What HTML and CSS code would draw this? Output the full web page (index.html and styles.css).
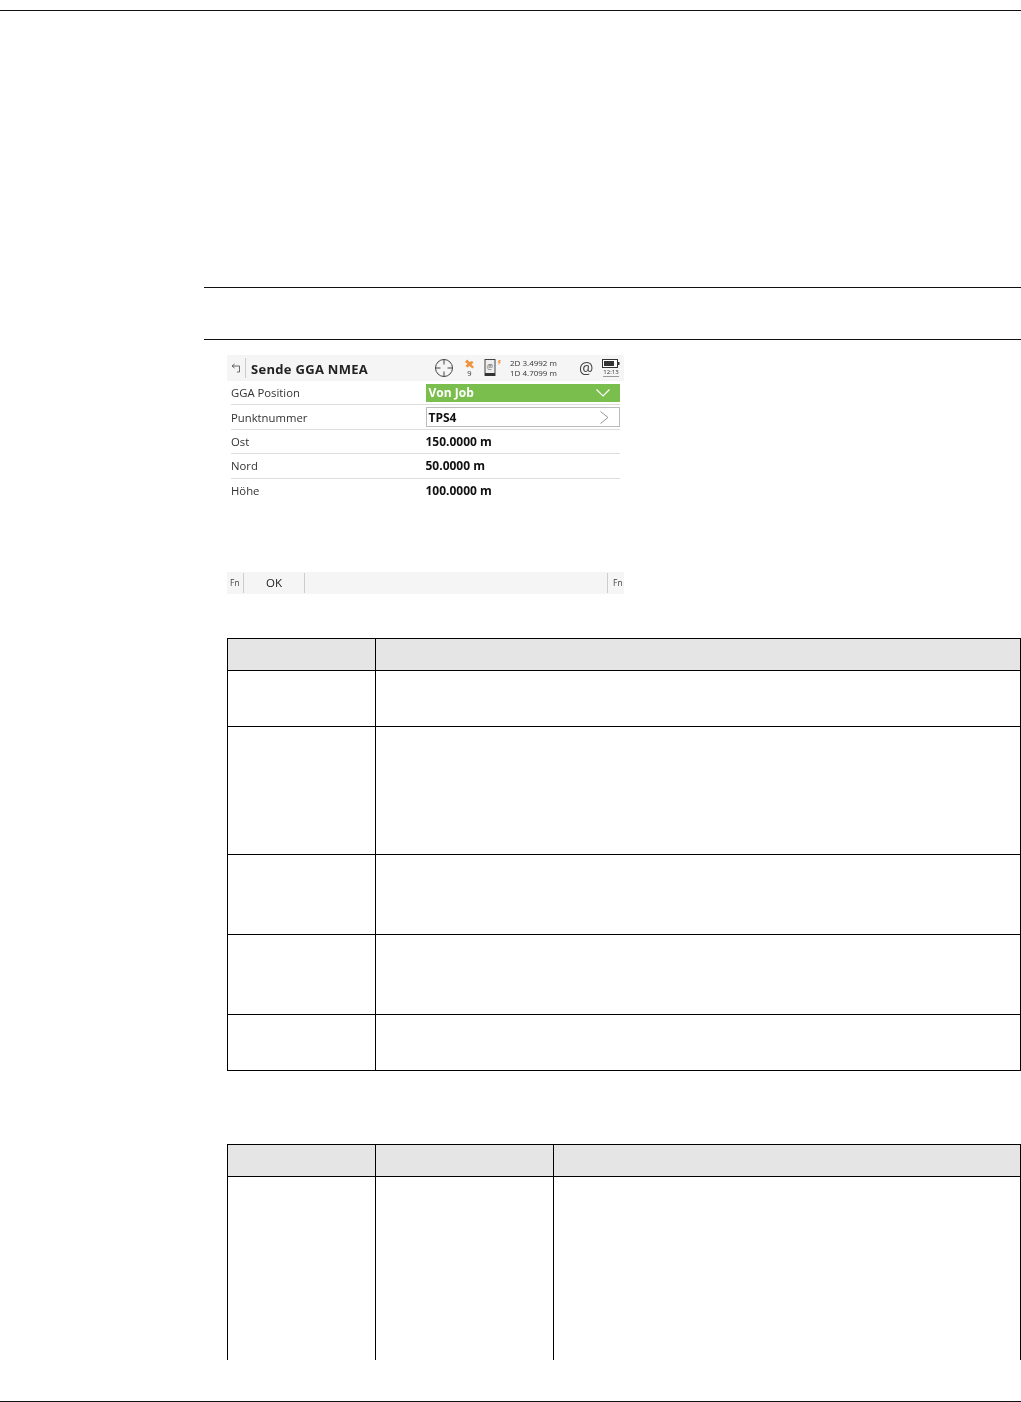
FILE: index.html
```html
<!DOCTYPE html>
<html lang="de">
<head>
<meta charset="utf-8">
<title>Sende GGA NMEA</title>
<link rel="stylesheet" href="styles.css">
</head>
<body>
<div class="page">
  <div class="top-rule"></div>
  <main class="content">
    <div class="section-rules"></div>
    <div class="device">
      <header class="dev-head">
        <svg class="back" viewBox="0 0 10 10" width="10" height="10"><path d="M3.500 1 1 3l2.500 2M1 3h7.500v6H6" fill="none" stroke="#666" stroke-width="1"/></svg>
        <span class="dev-sep"></span>
        <span class="dev-title">Sende GGA NMEA</span>
        <svg class="ico-cross" viewBox="0 0 20 20" width="20" height="20"><circle cx="10" cy="10" r="8.500" fill="none" stroke="#444" stroke-width="1"/><path d="M10 1.500v5M10 13.500v5M1.500 10h5M13.500 10h5" stroke="#444" stroke-width="1"/></svg>
        <span class="sat">
          <svg viewBox="0 0 11 10" width="11" height="10"><path d="M1 3 3 .5l2.500 2.500L8 2l1.500 1.500L7.500 5.500 10 8 8.500 9.500 5.500 7 3.500 8.500 1.500 7l2-2.200z" fill="#f0933a"/></svg>
          <span class="sat-n">9</span>
        </span>
        <svg class="ico-phone" viewBox="0 0 18 18" width="18" height="18"><rect x="1" y="0.500" width="10" height="16" fill="#eee" stroke="#444"/><rect x="1" y="14" width="10" height="3" fill="#333"/><text x="6" y="10" class="phone-at">@</text><path d="M15 1h2l-1.500 2H17l-3 3 1-2.500h-1.500z" fill="#f0933a"/></svg>
        <div class="quality"><span>2D 3.4992 m</span><span>1D 4.7099 m</span></div>
        <span class="at">@</span>
        <span class="batt">
          <svg viewBox="0 0 18 9" width="18" height="9"><rect x="0.500" y="0.500" width="15" height="8" fill="#fff" stroke="#333"/><rect x="2" y="2" width="10" height="5" fill="#333"/><rect x="16" y="3" width="1.500" height="3" fill="#333"/></svg>
          <span class="time">12:13</span>
        </span>
      </header>
      <div class="dev-row"><span class="lbl">GGA Position</span><div class="select"><span>Von Job</span><svg viewBox="0 0 14 8" width="14" height="8"><path d="M.5.500 7 7 13.500.500" fill="none" stroke="#fff" stroke-width="1.200"/></svg></div></div>
      <div class="dev-row"><span class="lbl">Punktnummer</span><div class="input"><span>TPS4</span><svg viewBox="0 0 9 13" width="9" height="13"><path d="M.5.500 8 6.500.5 12.500" fill="none" stroke="#999" stroke-width="1"/></svg></div></div>
      <div class="dev-row"><span class="lbl">Ost</span><span class="val">150.0000 m</span></div>
      <div class="dev-row"><span class="lbl">Nord</span><span class="val">50.0000 m</span></div>
      <div class="dev-row last"><span class="lbl">Höhe</span><span class="val">100.0000 m</span></div>
      <div class="dev-spacer"></div>
      <footer class="dev-foot">
        <span class="fn">Fn</span>
        <span class="ok">OK</span>
        <span class="foot-fill"></span>
        <span class="fn fn-right">Fn</span>
      </footer>
    </div>
    <table class="doc-table t1">
      <colgroup><col class="c1"><col></colgroup>
      <tr class="h-head"><th></th><th></th></tr>
      <tr class="h56"><td></td><td></td></tr>
      <tr class="h128"><td></td><td></td></tr>
      <tr class="h80"><td></td><td></td></tr>
      <tr class="h80"><td></td><td></td></tr>
      <tr class="h56"><td></td><td></td></tr>
    </table>
    <table class="doc-table t2">
      <colgroup><col class="c1"><col class="c2"><col></colgroup>
      <tr class="h-head"><th></th><th></th><th></th></tr>
      <tr class="h-cut"><td></td><td></td><td></td></tr>
    </table>
  </main>
  <div class="bottom-rule"></div>
</div>
</body>
</html>
```
FILE: styles.css
```css
html, body { margin: 0; padding: 0; background: #fff; }
.page { width: 1021px; height: 1402px; overflow: hidden; font-family: "Open Sans", "Liberation Sans", sans-serif; color: #222; }
.top-rule { margin-top: 10px; height: 1px; background: #111; }
.content { margin-left: 204px; }
.section-rules { margin-top: 276px; height: 51px; border-top: 1px solid #111; border-bottom: 1px solid #111; }
.device { margin: 15px 0 0 23px; width: 397px; height: 239px; display: flex; flex-direction: column; font-size: 11.500px; filter: blur(0.25px); }
.dev-head { height: 26px; flex: none; background: #f5f5f5; display: flex; align-items: center; position: relative; }
.back { margin-left: 4px; }
.dev-sep { width: 1px; height: 20px; background: #ccc; margin-left: 4px; }
.dev-title { margin-left: 5px; padding-top: 2px; font-size: 13px; font-weight: 700; color: #222; width: 180px; white-space: nowrap; letter-spacing: .3px; }
.ico-cross { margin-left: 3px; }
.sat { margin-left: 10px; width: 11px; display: flex; flex-direction: column; align-items: center; line-height: 1; }
.sat svg { display: block; }
.sat-n { font-size: 7.500px; margin-top: 1px; color: #333; }
.ico-phone { margin-left: 9px; }
.phone-at { font-size: 7px; text-anchor: middle; fill: #555; font-family: "Open Sans", sans-serif; }
.quality { margin-left: 8px; width: 69px; display: flex; flex-direction: column; font-size: 8px; line-height: 10px; color: #333; white-space: nowrap; }
.at { font-size: 16px; color: #444; line-height: 1; width: 23px; }
.batt { display: flex; flex-direction: column; width: 18px; align-items: center; }
.batt svg { display: block; }
.time { font-size: 6px; line-height: 7px; margin-top: 1px; border-bottom: 1px solid #999; color: #333; }
.dev-row { height: 24.400px; flex: none; box-sizing: border-box; margin-right: 4px; margin-left: 4px; display: grid; grid-template-columns: 194.500px 1fr; align-items: center; border-bottom: 1px solid #ddd; }
.dev-row.last { border-bottom: 0; }
.lbl { color: #333; font-size: 11.300px; }
.val { font-weight: 700; color: #111; font-size: 12px; }
.select { height: 18px; background: #7abf4e; color: #fff; font-weight: 700; display: flex; align-items: center; justify-content: space-between; padding: 0 10px 0 3px; font-size: 12px; }
.input { height: 20px; box-sizing: border-box; border: 1px solid #bbb; display: flex; align-items: center; justify-content: space-between; padding: 0 10px 0 2px; font-weight: 700; color: #111; font-size: 12px; }
.dev-spacer { flex: 1; }
.dev-foot { height: 22px; flex: none; background: #f5f5f5; display: flex; align-items: center; }
.fn { font-size: 8.500px; color: #444; width: 17px; box-sizing: border-box; padding-left: 3px; border-right: 1px solid #ccc; line-height: 20px; }
.ok { width: 61px; box-sizing: border-box; text-align: center; font-size: 11.500px; line-height: 20px; border-right: 1px solid #ccc; color: #222; }
.foot-fill { flex: 1; }
.fn-right { border-right: 0; border-left: 1px solid #ccc; padding-left: 5px; }
.doc-table { margin-left: 23px; width: 794px; table-layout: fixed; border-collapse: collapse; }
.doc-table th, .doc-table td { border: 1px solid #000; padding: 0; }
.doc-table th { background: #e5e5e5; }
.t1 { margin-top: 44px; }
.t2 { margin-top: 73px; }
.c1 { width: 148px; }
.c2 { width: 178px; }
.h-head { height: 32px; }
.h56 { height: 56px; }
.h128 { height: 128px; }
.h80 { height: 80px; }
.h-cut { height: 183px; }
.t2 .h-cut td { border-bottom: 0; }
.bottom-rule { margin-top: 41px; height: 1px; background: #111; }
```
